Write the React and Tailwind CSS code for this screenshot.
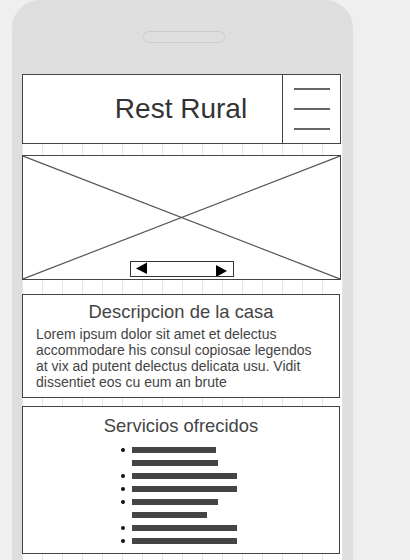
import React from "react";

const font = { fontFamily: '"Liberation Sans", Arial, sans-serif' };

function Bar({ w, bullet }) {
  return (
    <div className="flex items-center h-[13px]">
      <div className="w-[11px] flex items-center">
        {bullet ? <div className="w-[4px] h-[4px] rounded-full bg-[#111]" /> : null}
      </div>
      <div className="h-[6px] bg-[#444]" style={{ width: w }} />
    </div>
  );
}

export default function App() {
  const grid = {
    backgroundColor: "#ffffff",
    backgroundImage:
      "linear-gradient(to right, #e6e6e6 1px, transparent 1px)",
    backgroundSize: "20px 20px",
    backgroundPosition: "0px 0px",
  };
  return (
    <div className="w-[410px] h-[560px] overflow-hidden bg-[#efefef]" style={font}>
      <div className="ml-[12px] w-[341px] h-[600px] rounded-t-[28px] bg-[#dedede] pt-[31px] px-[10px]">
        <div className="ml-[121px] w-[82px] h-[12px] rounded-full border border-[#cccccc] bg-[#dedede]" />
        <div className="mt-[31px] w-[321px] h-[600px]" style={grid}>
          {/* header */}
          <div className="relative flex w-[319px] h-[70px] border border-[#444] bg-white">
            <div className="flex-1 flex items-center justify-center pl-[57px] text-[28px] text-[#333]">
              Rest Rural
            </div>
            <div className="w-[58px] border-l border-[#444] flex flex-col items-center justify-center gap-[18px]">
              <div className="w-[36px] h-[2px] bg-[#666]" />
              <div className="w-[36px] h-[2px] bg-[#666]" />
              <div className="w-[36px] h-[2px] bg-[#666]" />
            </div>
          </div>
          {/* image */}
          <div className="relative mt-[11px] w-[319px] h-[125px] border border-[#444] bg-white">
            <svg className="absolute inset-0 w-full h-full" viewBox="0 0 317 123" preserveAspectRatio="none">
              <line x1="0" y1="0" x2="317" y2="123" stroke="#555" strokeWidth="1.2" />
              <line x1="317" y1="0" x2="0" y2="123" stroke="#555" strokeWidth="1.2" />
            </svg>
            <div className="absolute left-[107px] top-[105px] w-[104px] h-[16px] border border-[#333] bg-white">
              <svg className="absolute left-0 top-0" width="102" height="14" viewBox="0 0 102 14">
                <polygon points="5,6.5 16,0.5 16,12" fill="#000" />
                <polygon points="85,3 96,9 85,15" fill="#000" />
              </svg>
            </div>
          </div>
          {/* description */}
          <div className="mt-[14px] w-[318px] h-[104px] border border-[#444] bg-white pt-[6px] px-[13px] text-[#444]">
            <div className="text-center text-[18.4px] leading-[21px]">Descripcion de la casa</div>
            <div className="mt-[4px] text-[14px] leading-[16px]">
              Lorem ipsum dolor sit amet et delectus
              <br />
              accommodare his consul copiosae legendos
              <br />
              at vix ad putent delectus delicata usu. Vidit
              <br />
              dissentiet eos cu eum an brute
            </div>
          </div>
          {/* services */}
          <div className="mt-[8px] w-[318px] h-[148px] border border-[#444] bg-white pt-[8px] text-[#444]">
            <div className="text-center text-[18.4px] leading-[21px]">Servicios ofrecidos</div>
            <div className="mt-[7px] ml-[98px] flex flex-col">
              <Bar w={84} bullet />
              <Bar w={86} />
              <Bar w={105} bullet />
              <Bar w={105} bullet />
              <Bar w={86} bullet />
              <Bar w={75} />
              <Bar w={105} bullet />
              <Bar w={105} bullet />
            </div>
          </div>
        </div>
      </div>
    </div>
  );
}
